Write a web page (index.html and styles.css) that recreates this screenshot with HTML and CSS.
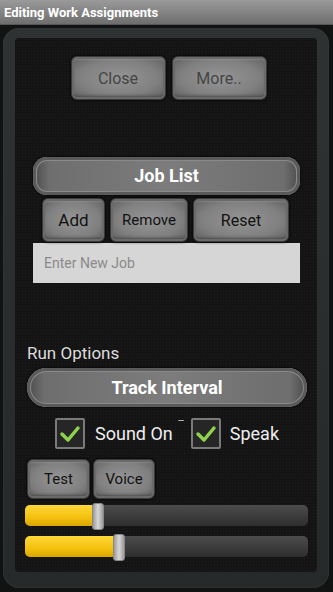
FILE: index.html
```html
<!DOCTYPE html>
<html lang="en">
<head>
    <meta charset="UTF-8">
    <meta name="viewport" content="width=device-width, initial-scale=1.0">
    <title>Editing Work Assignments</title>
    <link rel="stylesheet" href="styles.css">
</head>
<body>
    <div class="titlebar">Editing Work Assignments</div>

    <div class="frame">
        <div class="panel">
            <div class="top-row">
                <button class="btn btn-top">Close</button>
                <button class="btn btn-top">More..</button>
            </div>

            <div class="bar bar-job">Job List</div>

            <div class="job-row">
                <button class="btn btn-add">Add</button>
                <button class="btn btn-remove">Remove</button>
                <button class="btn btn-reset">Reset</button>
            </div>

            <input class="job-input" type="text" placeholder="Enter New Job">

            <div class="section-label">Run Options</div>

            <div class="bar bar-track">Track Interval</div>

            <div class="check-row">
                <label class="check">
                    <span class="box">
                        <svg width="22" height="18" viewBox="0 0 22 18"><polyline points="3,9 9,15 19,3" fill="none" stroke="#8fd14f" stroke-width="3.5" stroke-linecap="round" stroke-linejoin="round"/></svg>
                    </span>
                    <span class="check-text">Sound On</span>
                    <span class="dash">--</span>
                </label>
                <label class="check">
                    <span class="box">
                        <svg width="22" height="18" viewBox="0 0 22 18"><polyline points="3,9 9,15 19,3" fill="none" stroke="#8fd14f" stroke-width="3.5" stroke-linecap="round" stroke-linejoin="round"/></svg>
                    </span>
                    <span class="check-text">Speak</span>
                </label>
            </div>

            <div class="test-row">
                <button class="btn btn-test">Test</button>
                <button class="btn btn-voice">Voice</button>
            </div>

            <div class="slider">
                <div class="fill" style="width: 67px"></div>
                <div class="thumb"></div>
            </div>
            <div class="slider">
                <div class="fill" style="width: 88px"></div>
                <div class="thumb"></div>
            </div>
        </div>
    </div>
</body>
</html>
```

FILE: styles.css
```css
body {
    margin: 0;
    width: 333px;
    height: 592px;
    overflow: hidden;
    background-color: #111313;
    font-family: Roboto, "Liberation Sans", sans-serif;
}

.titlebar {
    height: 25px;
    line-height: 25px;
    padding-left: 4px;
    color: #fff;
    font-size: 13px;
    font-weight: bold;
    background: linear-gradient(#9a9a9a, #6e6e6e);
    border-bottom: 1px solid #555;
    box-sizing: border-box;
}

.frame {
    margin: 3px 4px 0 3px;
    height: 560px;
    padding: 10px 12px 16px 12px;
    box-sizing: border-box;
    border-radius: 16px;
    background: linear-gradient(#2e3232, #262929);
    box-shadow: inset 0 0 2px #444;
}

.panel {
    height: 100%;
    box-sizing: border-box;
    background-color: #141414;
    background-image: radial-gradient(#1e1e1e 1px, transparent 1px);
    background-size: 3px 3px;
    border-radius: 4px;
    padding-top: 18px;
}

.btn {
    font-family: Roboto, "Liberation Sans", sans-serif;
    border: 1px solid #3a3a3a;
    border-radius: 6px;
    background: radial-gradient(ellipse at center, #959595 0%, #808080 60%, #5e5e5e 100%);
    box-shadow: inset 0 0 0 2px #6a6a6a, inset 0 2px 2px #aaa, inset 0 -3px 3px #4a4a4a, 0 0 3px #000;
    color: #111;
    padding: 0;
    cursor: pointer;
}

.top-row {
    display: flex;
    justify-content: center;
    gap: 6px;
    padding-left: 5px;
}

.btn-top {
    width: 95px;
    height: 44px;
    font-size: 16px;
    color: #444;
}

.bar {
    height: 38px;
    line-height: 38px;
    text-align: center;
    color: #fff;
    font-size: 18px;
    font-weight: bold;
    border-radius: 14px;
    background: linear-gradient(90deg, #4a4a4a 0%, #6e6e6e 6%, #7c7c7c 50%, #6e6e6e 94%, #4a4a4a 100%);
    box-shadow: inset 0 0 0 3px #5a5a5a, inset 0 0 0 4px #8a8a8a, 0 0 3px #000;
}

.bar-job {
    margin: 57px 0 0 18px;
    width: 267px;
}

.job-row {
    display: flex;
    gap: 5px;
    margin: 3px 0 0 27px;
}

.job-row .btn {
    height: 44px;
}

.btn-add {
    width: 63px;
    font-size: 17px;
}

.btn-remove {
    width: 78px;
    font-size: 15px;
}

.btn-reset {
    width: 96px;
    font-size: 16px;
}

.job-input {
    display: block;
    margin: 1px 0 0 18px;
    width: 267px;
    height: 40px;
    box-sizing: border-box;
    border: none;
    background-color: #d6d6d6;
    padding-left: 11px;
    font-family: Roboto, "Liberation Sans", sans-serif;
    font-size: 14px;
}

.job-input::placeholder {
    color: #8a8a8a;
}

.section-label {
    margin: 60px 0 0 12px;
    color: #dcdcdc;
    font-size: 17px;
    height: 25px;
}

.bar-track {
    margin: 0 0 0 12px;
    width: 280px;
    height: 39px;
    line-height: 39px;
    border-radius: 20px;
}

.check-row {
    display: flex;
    margin: 11px 0 0 40px;
}

.check {
    display: flex;
    align-items: center;
    position: relative;
}

.box {
    width: 30px;
    height: 31px;
    box-sizing: border-box;
    border: 2px solid #7a7a7a;
    border-radius: 2px;
    background-color: #262626;
    display: flex;
    align-items: center;
    justify-content: center;
}

.check-text {
    color: #eee;
    font-size: 18px;
    margin-left: 10px;
    margin-right: 18px;
}

.check + .check .check-text {
    margin-left: 9px;
}

.dash {
    position: absolute;
    right: 7px;
    top: -3px;
    color: #ddd;
    font-size: 10px;
}

.test-row {
    display: flex;
    gap: 3px;
    margin: 10px 0 0 12px;
}

.test-row .btn {
    height: 40px;
    font-size: 15px;
}

.btn-test {
    width: 63px;
}

.btn-voice {
    width: 62px;
}

.slider {
    position: relative;
    margin: 6px 0 0 10px;
    width: 283px;
    height: 21px;
    border-radius: 5px;
    background: linear-gradient(#4c4c4c, #3a3a3a 60%, #2e2e2e);
    display: flex;
}

.slider + .slider {
    margin-top: 10px;
}

.fill {
    height: 100%;
    border-radius: 5px 0 0 5px;
    background: linear-gradient(#ffd83a, #f4c00e 60%, #d9a600);
}

.thumb {
    width: 12px;
    height: 27px;
    margin-top: -2px;
    box-sizing: border-box;
    border: 1px solid #888;
    border-radius: 3px;
    background: linear-gradient(90deg, #9a9a9a, #d8d8d8 50%, #9a9a9a);
}
```
